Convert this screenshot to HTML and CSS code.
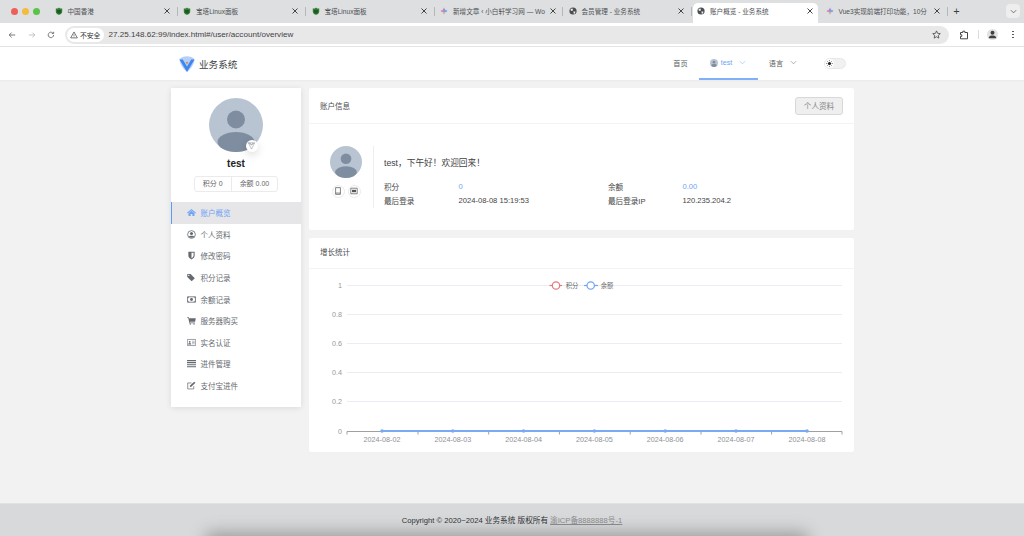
FILE: index.html
```html
<!DOCTYPE html>
<html lang="zh-CN">
<head>
  <meta charset="UTF-8">
  <title>账户概览 - 业务系统</title>
  <link rel="stylesheet" href="styles.css">
</head>
<body>
  <svg class="sprites" width="0" height="0">
    <symbol id="i-shield" viewBox="0 0 10 10"><path d="M5 0.5 L6.5 1.8 L9 2 V5.5 C9 7.8 7 9 5 9.8 C3 9 1 7.8 1 5.5 V2 L3.5 1.8 Z" fill="#2f7d32"/><path d="M2.5 3.6 H7.5 V6 C7.5 7.2 6 8 5 8.4 C4 8 2.5 7.2 2.5 6 Z" fill="#1f5a24"/></symbol>
    <symbol id="i-spark" viewBox="0 0 10 10"><path d="M5 0.5 L6.3 3.7 L9.5 5 L6.3 6.3 L5 9.5 L3.7 6.3 L0.5 5 L3.7 3.7 Z" fill="#9a7fe0"/><circle cx="3" cy="5" r="1.5" fill="#e58aa8"/><circle cx="7" cy="5" r="1.5" fill="#6fb0e8"/><circle cx="5" cy="7.2" r="1.1" fill="#e8c46a"/></symbol>
    <symbol id="i-globe" viewBox="0 0 10 10"><circle cx="5" cy="5" r="4.5" fill="#4a4d52"/><path d="M2 2.5 L4.5 2 L5 4 L3.5 5 L2 4 Z M5.5 5.5 L8 5.5 L7.5 8 L6 8.5 Z" fill="#f0f0f0"/></symbol>
    <symbol id="i-x" viewBox="0 0 8 8"><path d="M1.5 1.5 L6.5 6.5 M6.5 1.5 L1.5 6.5" stroke="#44474a" stroke-width="1" fill="none"/></symbol>
    <symbol id="i-user" viewBox="0 0 54 54"><circle cx="27" cy="27" r="27" fill="#b9c4d2"/><circle cx="27" cy="21.5" r="9" fill="#7f8da0"/><ellipse cx="27" cy="44" rx="18.5" ry="10" fill="#7f8da0"/></symbol>
    <symbol id="i-chev" viewBox="0 0 8 8"><path d="M1 2.5 L4 5.5 L7 2.5" stroke="currentColor" stroke-width="0.8" fill="none"/></symbol>
  </svg>

  <div class="tabstrip">
    <div class="lights"><i class="red"></i><i class="yellow"></i><i class="green"></i></div>
    <div class="tab"><svg class="fav"><use href="#i-shield"/></svg><span class="tab-title">中国香港</span><svg class="tab-x"><use href="#i-x"/></svg></div>
    <div class="tab"><svg class="fav"><use href="#i-shield"/></svg><span class="tab-title">宝塔Linux面板</span><svg class="tab-x"><use href="#i-x"/></svg></div>
    <div class="tab"><svg class="fav"><use href="#i-shield"/></svg><span class="tab-title">宝塔Linux面板</span><svg class="tab-x"><use href="#i-x"/></svg></div>
    <div class="tab"><svg class="fav"><use href="#i-spark"/></svg><span class="tab-title">新增文章 ‹ 小白轩学习网 — Wo</span><svg class="tab-x"><use href="#i-x"/></svg></div>
    <div class="tab"><svg class="fav"><use href="#i-globe"/></svg><span class="tab-title">会员管理 - 业务系统</span><svg class="tab-x"><use href="#i-x"/></svg></div>
    <div class="tab active"><svg class="fav"><use href="#i-globe"/></svg><span class="tab-title">账户概览 - 业务系统</span><svg class="tab-x"><use href="#i-x"/></svg></div>
    <div class="tab last"><svg class="fav"><use href="#i-spark"/></svg><span class="tab-title">Vue3实现前端打印功能，10分</span><svg class="tab-x"><use href="#i-x"/></svg></div>
    <div class="tab-plus">+</div>
    <div class="tab-list"><svg><use href="#i-chev"/></svg></div>
  </div>

  <div class="toolbar">
    <svg class="tool" viewBox="0 0 10 10"><path d="M9 5 H1.5 M4.5 2 L1.5 5 L4.5 8" stroke="#55585c" stroke-width="1" fill="none"/></svg>
    <svg class="tool" viewBox="0 0 10 10"><path d="M1 5 H8.5 M5.5 2 L8.5 5 L5.5 8" stroke="#b4b6b9" stroke-width="1" fill="none"/></svg>
    <svg class="tool" viewBox="0 0 10 10"><path d="M8.3 5 A3.4 3.4 0 1 1 7.2 2.4 M8.3 1 V3.2 H6" stroke="#55585c" stroke-width="1" fill="none"/></svg>
    <div class="omnibox">
      <div class="not-secure">
        <svg viewBox="0 0 10 10"><path d="M5 1.2 L9.2 8.6 H0.8 Z" stroke="#44474a" stroke-width="0.9" fill="none"/><path d="M5 4 V6.2 M5 7 V7.8" stroke="#44474a" stroke-width="0.8"/></svg>
        <span>不安全</span>
      </div>
      <span class="url">27.25.148.62:99/index.html#/user/account/overview</span>
      <svg class="star" viewBox="0 0 10 10"><path d="M5 1 L6.2 3.7 L9.2 4 L7 6 L7.6 9 L5 7.5 L2.4 9 L3 6 L0.8 4 L3.8 3.7 Z" stroke="#44474a" stroke-width="0.9" fill="none"/></svg>
    </div>
    <svg class="ext" viewBox="0 0 10 10"><path d="M1.5 2.5 H3.8 V1.2 H5.8 V2.5 H8.5 V8.8 H1.5 V6.4 H2.8 V4.8 H1.5 Z" stroke="#44474a" stroke-width="1" fill="none"/></svg>
    <i class="tool-sep"></i>
    <div class="profile"><svg viewBox="0 0 10 10"><circle cx="5" cy="3.5" r="1.8" fill="#3d4043"/><path d="M1.5 8.5 C1.5 6.5 3.5 6 5 6 C6.5 6 8.5 6.5 8.5 8.5 Z" fill="#3d4043"/></svg></div>
    <div class="kebab"><i></i><i></i><i></i></div>
  </div>

  <header class="site-header">
    <div class="brand">
      <svg class="logo" viewBox="0 0 16 16">
        <path d="M0.6 3 C2.5 1 5 0.2 8 0.2 C11 0.2 13.5 1 15.4 3 C15.6 7.5 12 13 8 15.8 C4 13 0.4 7.5 0.6 3 Z" fill="#b4d0f7"/>
        <path d="M0.4 3.4 L3.8 3.4 L8 10.6 L12.2 3.4 L15.6 3.4 L8 16 Z" fill="#3f86ee"/>
        <path d="M6.7 6 L9.3 6 L8 8.6 Z" fill="#e0803c"/>
      </svg>
      <span>业务系统</span>
    </div>
    <nav class="top-nav">
      <a class="nav-item">首页</a>
      <a class="nav-item nav-user"><svg class="nav-avatar"><use href="#i-user"/></svg><span>test</span><svg class="nav-chev"><use href="#i-chev"/></svg></a>
      <a class="nav-item nav-lang"><span>语言</span><svg class="nav-chev"><use href="#i-chev"/></svg></a>
      <div class="theme-toggle">
        <span><svg viewBox="0 0 10 10"><circle cx="5" cy="5" r="1.8" fill="#222"/><path d="M5 1.4 V2.4 M5 7.6 V8.6 M1.4 5 H2.4 M7.6 5 H8.6 M2.5 2.5 L3.2 3.2 M6.8 6.8 L7.5 7.5 M2.5 7.5 L3.2 6.8 M6.8 3.2 L7.5 2.5" stroke="#222" stroke-width="0.7"/></svg></span>
      </div>
    </nav>
  </header>

  <main class="page">
    <aside class="side-card">
      <div class="profile-top">
        <div class="big-avatar">
          <svg class="big-avatar-img"><use href="#i-user"/></svg>
          <div class="vip-badge"><svg viewBox="0 0 10 10"><path d="M1.5 2 H8.5 L5 9 Z M3.4 2 L5 4.4 L6.6 2 M1.5 2 L5 4.4 L8.5 2" stroke="#8a9099" stroke-width="0.6" fill="none"/></svg></div>
        </div>
        <div class="profile-name">test</div>
        <div class="profile-stats"><span>积分 0</span><span>余额 0.00</span></div>
      </div>
      <ul class="side-menu">
        <li class="active"><svg viewBox="0 0 10 10"><path d="M5 1 L10 5.3 L9.3 6 L5 2.4 L0.7 6 L0 5.3 Z M1.7 5.8 L5 3.1 L8.3 5.8 V9 H6 V6.6 H4 V9 H1.7 Z" fill="currentColor"/></svg>账户概览</li>
        <li><svg viewBox="0 0 10 10"><circle cx="5" cy="5" r="4.3" stroke="currentColor" fill="none" stroke-width="0.9"/><circle cx="5" cy="3.9" r="1.7" fill="currentColor"/><path d="M2 7.6 C2.6 6 7.4 6 8 7.6 C7 8.9 3 8.9 2 7.6 Z" fill="currentColor"/></svg>个人资料</li>
        <li><svg viewBox="0 0 10 10"><path d="M1.5 0.8 H8.5 V5 C8.5 7.3 6.5 8.6 5 9.4 C3.5 8.6 1.5 7.3 1.5 5 Z" fill="currentColor"/><path d="M5 2 H7.3 V5 C7.3 6.3 6 7.4 5 8 Z" fill="#fff"/></svg>修改密码</li>
        <li><svg viewBox="0 0 10 10"><path d="M0.3 1 H4 L8.7 5.7 L5.2 9.2 L0.3 4.5 Z" fill="currentColor"/><circle cx="2" cy="2.7" r="0.7" fill="#fff"/></svg>积分记录</li>
        <li><svg viewBox="0 0 10 10"><path d="M0.5 2 H9.5 V8 H0.5 Z" stroke="currentColor" fill="none" stroke-width="0.9"/><circle cx="5" cy="5" r="1.6" fill="currentColor"/><path d="M1 3.8 V2.5 H2.3 M9 3.8 V2.5 H7.7 M1 6.2 V7.5 H2.3 M9 6.2 V7.5 H7.7" stroke="currentColor" stroke-width="0.7" fill="none"/></svg>余额记录</li>
        <li><svg viewBox="0 0 10 10"><path d="M0.2 1.4 H2 L2.4 2.6 H9.8 L9 6.4 H3.2 L3.5 7.2 H8.6 V8 H2.7 L1.4 2.2 H0.2 Z" fill="currentColor"/><circle cx="3.6" cy="8.8" r="0.8" fill="currentColor"/><circle cx="7.8" cy="8.8" r="0.8" fill="currentColor"/></svg>服务器购买</li>
        <li><svg viewBox="0 0 10 10"><path d="M0.4 1.6 H9.6 V8.4 H0.4 Z" stroke="currentColor" fill="none" stroke-width="0.7"/><circle cx="3" cy="4.2" r="1" fill="currentColor"/><path d="M1.5 7 C1.5 5.5 4.5 5.5 4.5 7 Z M5.6 3.6 H8.6 M5.6 5 H8.6 M5.6 6.4 H8.6" fill="currentColor" stroke="currentColor" stroke-width="0.5"/></svg>实名认证</li>
        <li><svg viewBox="0 0 10 10"><path d="M0 1.2 H10 V2.6 H0 Z M0 3.6 H10 V5 H0 Z M0 6 H10 V7.4 H0 Z M0 8.4 H10 V9.6 H0 Z" fill="currentColor" transform="scale(1 .95)"/></svg>进件管理</li>
        <li><svg viewBox="0 0 10 10"><path d="M7.5 5.8 V8.8 H0.8 V2.2 H5" stroke="currentColor" fill="none" stroke-width="0.8"/><path d="M3.4 5 L8 0.7 L9.4 2 L4.8 6.4 L3.2 6.7 Z" fill="currentColor"/></svg>支付宝进件</li>
      </ul>
    </aside>

    <section class="content">
      <div class="card">
        <div class="card-head info-head">
          <span>账户信息</span>
          <button class="btn-profile">个人资料</button>
        </div>
        <div class="info-body">
          <div class="info-left">
            <svg class="info-avatar"><use href="#i-user"/></svg>
            <div class="device-icons">
              <span><svg viewBox="0 0 10 10"><path d="M2 0.8 H8 V9.2 H2 Z M2 7.6 H8" stroke="#555" stroke-width="0.9" fill="none"/></svg></span>
              <span><svg viewBox="0 0 10 10"><path d="M1 1.5 H9 V8.5 H1 Z" stroke="#555" stroke-width="0.9" fill="none"/><path d="M2.5 3.5 H7.5 V6.5 H2.5 Z" fill="#555"/></svg></span>
            </div>
          </div>
          <div class="info-main">
            <p class="greeting">test，下午好！欢迎回来！</p>
            <div class="info-grid">
              <span>积分</span><span class="num">0</span><span>余额</span><span class="num">0.00</span>
              <span>最后登录</span><span>2024-08-08 15:19:53</span><span>最后登录IP</span><span>120.235.204.2</span>
            </div>
          </div>
        </div>
      </div>

      <div class="card chart-card">
        <div class="card-head chart-head">增长统计</div>
        <svg class="chart" viewBox="0 1 545 183" width="545" height="183">
          <g class="grid">
            <path d="M38 17.5 H533"/><path d="M38 46.5 H533"/><path d="M38 75.5 H533"/><path d="M38 104.5 H533"/><path d="M38 133.5 H533"/>
          </g>
          <g class="y-labels">
            <text x="33" y="19.5">1</text><text x="33" y="48.8">0.8</text><text x="33" y="78">0.6</text><text x="33" y="107.2">0.4</text><text x="33" y="136.3">0.2</text><text x="33" y="165.5">0</text>
          </g>
          <path class="axis" d="M38 163.5 H533 M38 163.5 V166.5 M109 163.5 V166.5 M179.7 163.5 V166.5 M250.4 163.5 V166.5 M321.2 163.5 V166.5 M392 163.5 V166.5 M462.6 163.5 V166.5 M533 163.5 V166.5"/>
          <path class="series" d="M73 163 H498"/>
          <g class="dots">
            <circle cx="73" cy="163" r="1.8"/><circle cx="143.8" cy="163" r="1.8"/><circle cx="214.6" cy="163" r="1.8"/><circle cx="285.4" cy="163" r="1.8"/><circle cx="356.2" cy="163" r="1.8"/><circle cx="427" cy="163" r="1.8"/><circle cx="498" cy="163" r="1.8"/>
          </g>
          <g class="x-labels">
            <text x="73" y="173.5">2024-08-02</text><text x="143.8" y="173.5">2024-08-03</text><text x="214.6" y="173.5">2024-08-04</text><text x="285.4" y="173.5">2024-08-05</text><text x="356.2" y="173.5">2024-08-06</text><text x="427" y="173.5">2024-08-07</text><text x="498" y="173.5">2024-08-08</text>
          </g>
          <g class="legend">
            <path d="M240.5 17.5 H253" stroke="#e8777a"/><circle cx="247" cy="17.5" r="3.7" fill="#fff" stroke="#e8777a"/>
            <text x="256.7" y="20">积分</text>
            <path d="M275 17.5 H289" stroke="#6ea3f5"/><circle cx="281.7" cy="17.5" r="3.7" fill="#fff" stroke="#6ea3f5"/>
            <text x="291.7" y="20">余额</text>
          </g>
        </svg>
      </div>
    </section>
  </main>

  <footer class="site-footer">
    Copyright © 2020~2024 业务系统 版权所有 <a>渝ICP备8888888号-1</a>
  </footer>
</body>
</html>
```

FILE: styles.css
```css
* {
  margin: 0;
  padding: 0;
  box-sizing: border-box;
}

html, body {
  width: 1024px;
  height: 536px;
  overflow: hidden;
}

body {
  display: flex;
  flex-direction: column;
  background: #f2f2f2;
  color: #4a4d52;
  font-family: "Liberation Sans", "Noto Sans CJK SC", sans-serif;
  font-size: 7.5px;
}

.sprites {
  position: absolute;
}

/* Browser tabs */
.tabstrip {
  height: 23px;
  flex: none;
  display: flex;
  align-items: flex-end;
  background: #dedfe0;
  padding-top: 3px;
}

.lights {
  width: 49px;
  height: 20px;
  flex: none;
  display: flex;
  align-items: center;
  gap: 4px;
  padding: 0 0 4px 11px;
}

.lights i {
  width: 7px;
  height: 7px;
  border-radius: 50%;
}

.lights .red { background: #ee5f57; }
.lights .yellow { background: #f5bb3f; }
.lights .green { background: #5ac445; }

.tab {
  width: 128.5px;
  height: 20px;
  flex: none;
  display: flex;
  align-items: center;
  padding: 0 7px 4px 5.5px;
  position: relative;
  color: #4d5054;
  font-size: 6.6px;
}

.tab::after {
  content: '';
  position: absolute;
  right: 0;
  top: 4px;
  height: 9px;
  border-right: 1px solid #b5b7b9;
}

.tab.active {
  background: #fff;
  border-radius: 5px 5px 0 0;
  width: 125px;
  margin-left: 1px;
  padding: 0 3.8px 4px 4.5px;
}

.tab.active::after { display: none; }

.tab.last {
  width: 127.5px;
  margin-left: 3px;
  padding: 0 6.8px 4px 5px;
}

.fav {
  width: 8px;
  height: 8px;
  flex: none;
  margin-right: 5px;
}

.tab-title {
  flex: 1;
  white-space: nowrap;
}

.tab-x {
  width: 8px;
  height: 8px;
  flex: none;
  margin-left: 4px;
}

.tab-plus {
  width: 20px;
  height: 20px;
  margin-left: -1.5px;
  padding-bottom: 4px;
  display: flex;
  align-items: center;
  justify-content: center;
  font-size: 11px;
  color: #3c3f42;
}

.tab-list {
  width: 14px;
  height: 14px;
  margin: 0 4px 5px auto;
  border-radius: 4px;
  background: #eeeeef;
  color: #3c3f42;
  display: flex;
  align-items: center;
  justify-content: center;
}

.tab-list svg {
  width: 7px;
  height: 7px;
}

/* Address bar */
.toolbar {
  height: 24px;
  flex: none;
  display: flex;
  align-items: center;
  background: #fff;
  border-bottom: 1px solid #e4e4e5;
  padding-left: 8px;
}

.tool {
  width: 8px;
  height: 8px;
  flex: none;
  margin-right: 11.5px;
}

.omnibox {
  width: 884px;
  height: 18px;
  margin-left: -1.5px;
  border-radius: 9px;
  background: #e9e8e9;
  display: flex;
  align-items: center;
  padding: 0 8px 0 2px;
}

.not-secure {
  height: 14px;
  padding: 0 4px 0 3px;
  border-radius: 7px;
  background: #fff;
  display: flex;
  align-items: center;
  gap: 2px;
  font-size: 6.8px;
  color: #333;
}

.not-secure svg {
  width: 8px;
  height: 8px;
}

.url {
  margin-left: 4px;
  font-size: 8.1px;
  color: #3f4245;
  flex: 1;
}

.star {
  width: 9px;
  height: 9px;
}

.ext {
  width: 10px;
  height: 10px;
  margin-left: 10px;
}

.tool-sep {
  height: 9px;
  margin-left: 9px;
  border-right: 1px solid #dcdcdd;
}

.profile {
  width: 11px;
  height: 11px;
  margin-left: 8px;
  border-radius: 50%;
  background: #e2e2e3;
}

.profile svg {
  display: block;
  width: 11px;
  height: 11px;
}

.kebab {
  margin-left: 14px;
  display: flex;
  flex-direction: column;
  gap: 1.5px;
}

.kebab i {
  width: 1.6px;
  height: 1.6px;
  border-radius: 50%;
  background: #44474a;
}

/* Site header */
.site-header {
  height: 33px;
  flex: none;
  display: flex;
  align-items: center;
  justify-content: space-between;
  background: #fff;
  padding: 0 178px 0 179px;
  box-shadow: 0 1px 2px rgba(0, 0, 0, 0.04);
  position: relative;
}

.brand {
  display: flex;
  align-items: center;
  gap: 4px;
  font-size: 9.6px;
  color: #3a3d41;
}

.logo {
  width: 16px;
  height: 16px;
}

.top-nav {
  display: flex;
  align-items: center;
  height: 100%;
}

.nav-item {
  height: 100%;
  display: flex;
  align-items: center;
  padding-bottom: 2px;
  color: #5a5d61;
  font-size: 7.2px;
}

.nav-user {
  width: 59px;
  margin-left: 11px;
  padding: 0 0 0 11px;
  color: #6ea3f5;
  border-bottom: 2px solid #7fb0f8;
}

.nav-avatar {
  width: 8px;
  height: 8px;
  margin-right: 3px;
}

.nav-chev {
  width: 7px;
  height: 7px;
  margin-left: 6.5px;
  color: #8a8d91;
}

.nav-user .nav-chev {
  color: #9dc0f5;
}

.nav-lang {
  margin-left: 11px;
}

.theme-toggle {
  width: 22px;
  height: 11px;
  margin-left: 27.4px;
  border-radius: 6px;
  background: #f1f1f2;
  border: 1px solid #e8e8e9;
  display: flex;
  align-items: center;
}

.theme-toggle span {
  width: 9px;
  height: 9px;
  border-radius: 50%;
  background: #fff;
  display: flex;
}

.theme-toggle svg {
  width: 9px;
  height: 9px;
}

/* Page body */
.page {
  flex: 1;
  display: flex;
  align-items: flex-start;
  gap: 8px;
  padding: 8px 0 0 171px;
}

.side-card {
  width: 130px;
  height: 319px;
  flex: none;
  background: #fff;
  box-shadow: 0 1px 6px rgba(0, 0, 0, 0.1);
}

.profile-top {
  height: 114px;
  padding-top: 10px;
  display: flex;
  flex-direction: column;
  align-items: center;
}

.big-avatar {
  width: 54px;
  height: 54px;
  position: relative;
}

.big-avatar-img {
  width: 54px;
  height: 54px;
  display: block;
}

.vip-badge {
  position: absolute;
  right: 5.4px;
  bottom: 0.4px;
  width: 12px;
  height: 12px;
  border-radius: 50%;
  background: #fff;
  box-shadow: 0 3px 8px rgba(0, 0, 0, 0.15);
  display: flex;
  align-items: center;
  justify-content: center;
}

.vip-badge svg {
  width: 9px;
  height: 9px;
}

.profile-name {
  margin-top: 6px;
  font-size: 10px;
  line-height: 12px;
  font-weight: bold;
  color: #222;
}

.profile-stats {
  margin-top: 5.5px;
  height: 16px;
  display: flex;
  border: 1px solid #ebebeb;
  border-radius: 3px;
  color: #666;
  font-size: 7px;
}

.profile-stats span {
  padding: 0 8px;
  line-height: 14px;
}

.profile-stats span + span {
  border-left: 1px solid #ebebeb;
}

.side-menu {
  list-style: none;
}

.side-menu li {
  height: 21.6px;
  display: flex;
  align-items: center;
  padding-left: 16px;
  color: #666a6f;
  font-size: 7.5px;
}

.side-menu li.active {
  background: #e6e6e8;
  color: #6ea3f5;
  border-left: 1px solid #5b9bf8;
  padding-left: 15px;
}

.side-menu svg {
  width: 9px;
  height: 9px;
  margin-right: 4.5px;
  flex: none;
}

.content {
  width: 545px;
  flex: none;
  display: flex;
  flex-direction: column;
  gap: 8px;
}

.card {
  background: #fff;
  border-radius: 2px;
}

.card-head {
  border-bottom: 1px solid #f3f3f4;
  color: #4a4d52;
  font-size: 7.5px;
}

.info-head {
  height: 36px;
  display: flex;
  align-items: center;
  justify-content: space-between;
  padding: 0 11px;
}

.btn-profile {
  width: 48px;
  height: 18px;
  border: 1px solid #d8d8d8;
  border-radius: 3px;
  background: #efefef;
  color: #888;
  font-family: inherit;
  font-size: 7.6px;
}

.info-body {
  height: 106px;
  display: flex;
  padding: 22px 0 0 21px;
}

.info-left {
  width: 44px;
  height: 62px;
  flex: none;
  border-right: 1px solid #eeeef0;
}

.info-avatar {
  display: block;
  width: 32px;
  height: 32px;
}

.device-icons {
  width: 32px;
  margin-top: 6.5px;
  display: flex;
  justify-content: space-between;
  padding: 0 1.5px;
}

.device-icons span {
  width: 13px;
  height: 13px;
  border: 1px solid #ebebec;
  border-radius: 50%;
  display: flex;
  align-items: center;
  justify-content: center;
}

.device-icons svg {
  width: 8px;
  height: 8px;
}

.info-main {
  padding-left: 10px;
}

.greeting {
  margin-top: 11px;
  font-size: 8.7px;
  line-height: 12px;
  color: #3f4245;
}

.info-grid {
  margin-top: 10px;
  display: grid;
  grid-template-columns: 74.5px 149.5px 74.5px auto;
  grid-auto-rows: 14px;
  align-items: center;
  font-size: 7.6px;
  color: #444;
}

.num {
  color: #6ea3f5;
}

.chart-card {
  height: 214px;
}

.chart-head {
  height: 31px;
  line-height: 30px;
  padding-left: 11px;
}

.chart {
  display: block;
}

.grid path {
  stroke: #ececf4;
  stroke-width: 1;
  fill: none;
}

.axis {
  stroke: #a0a0a0;
  stroke-width: 1;
  fill: none;
}

.series {
  stroke: #7aaaf6;
  stroke-width: 2;
  fill: none;
}

.dots circle {
  fill: #7aaaf6;
}

.y-labels text {
  fill: #999;
  font-size: 7.2px;
  text-anchor: end;
}

.x-labels text {
  fill: #8e9196;
  font-size: 7.2px;
  text-anchor: middle;
}

.legend text {
  fill: #666;
  font-size: 6.3px;
}

.legend path {
  stroke-width: 1.2;
  fill: none;
}

.legend circle {
  stroke-width: 1.2;
}

/* Footer */
.site-footer {
  height: 33px;
  flex: none;
  position: relative;
  overflow: hidden;
  display: flex;
  align-items: center;
  justify-content: center;
  gap: 2px;
  padding-bottom: 2px;
  background: #d8d9da;
  border-top: 1px solid #e0e1e1;
  color: #2f3236;
  font-size: 7.65px;
}

.site-footer a {
  color: #8b8d90;
  text-decoration: underline;
}

.site-footer::after {
  content: '';
  position: absolute;
  left: 205px;
  right: 215px;
  bottom: -16px;
  height: 20px;
  border-radius: 8px;
  background: rgba(60, 60, 60, 0.38);
  filter: blur(8px);
}
```
